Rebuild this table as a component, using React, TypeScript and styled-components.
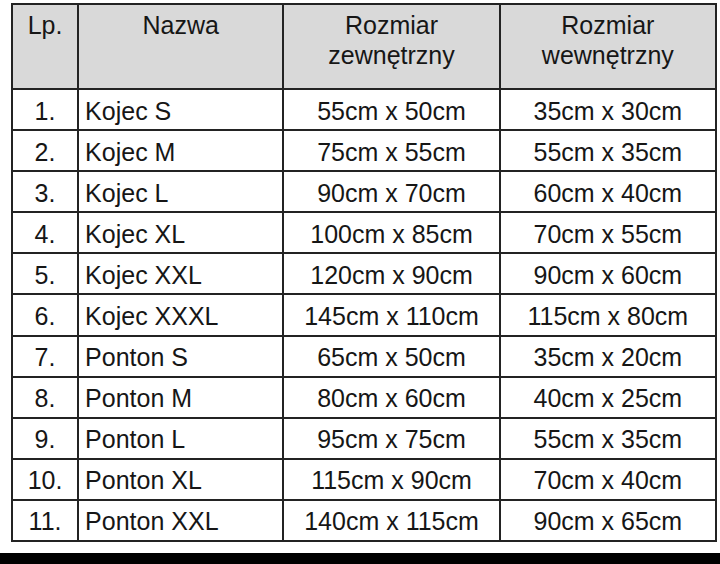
import React from "react";
import styled, { createGlobalStyle } from "styled-components";

const Global = createGlobalStyle`
  html, body { margin: 0; padding: 0; background: #fff; }
  body { font-family: "Liberation Sans", Arial, sans-serif; }
`;

const Page = styled.div`
  height: 564px;
  display: flex;
  flex-direction: column;
  justify-content: space-between;
  background: #fff;
`;

const TableWrap = styled.div`
  padding: 3px 0 0 11px;
`;

const Table = styled.table`
  border-collapse: collapse;
  table-layout: fixed;
  width: 706px;
  color: #161616;
  font-size: 25px;
`;

const HeadRow = styled.tr`
  height: 85px;
  background: #d9d9d9;
`;

const HeadCell = styled.th`
  border: 2px solid #232323;
  font-weight: normal;
  vertical-align: top;
  text-align: center;
  line-height: 30px;
  padding: 5px 4px 0;
`;

const Row = styled.tr`
  height: 41.1px;
`;

const Cell = styled.td<{ $align?: "left" | "center" }>`
  border: 2px solid #232323;
  text-align: ${(p) => p.$align ?? "center"};
  padding: 2px 0 0 ${(p) => (p.$align === "left" ? "6px" : "0")};
  white-space: nowrap;
  line-height: 30px;
  vertical-align: middle;
`;

const BottomBar = styled.div`
  height: 11px;
  background: #000;
`;

const rows: [string, string, string][] = [
  ["Kojec S", "55cm x 50cm", "35cm x 30cm"],
  ["Kojec M", "75cm x 55cm", "55cm x 35cm"],
  ["Kojec L", "90cm x 70cm", "60cm x 40cm"],
  ["Kojec XL", "100cm x 85cm", "70cm x 55cm"],
  ["Kojec XXL", "120cm x 90cm", "90cm x 60cm"],
  ["Kojec XXXL", "145cm x 110cm", "115cm x 80cm"],
  ["Ponton S", "65cm x 50cm", "35cm x 20cm"],
  ["Ponton M", "80cm x 60cm", "40cm x 25cm"],
  ["Ponton L", "95cm x 75cm", "55cm x 35cm"],
  ["Ponton XL", "115cm x 90cm", "70cm x 40cm"],
  ["Ponton XXL", "140cm x 115cm", "90cm x 65cm"],
];

export default function App() {
  return (
    <Page>
      <Global />
      <TableWrap>
        <Table>
          <colgroup>
            <col style={{ width: 66 }} />
            <col style={{ width: 205 }} />
            <col style={{ width: 216 }} />
            <col style={{ width: 216 }} />
          </colgroup>
          <thead>
            <HeadRow>
              <HeadCell>Lp.</HeadCell>
              <HeadCell>Nazwa</HeadCell>
              <HeadCell>
                Rozmiar
                <br />
                zewnętrzny
              </HeadCell>
              <HeadCell>
                Rozmiar
                <br />
                wewnętrzny
              </HeadCell>
            </HeadRow>
          </thead>
          <tbody>
            {rows.map((r, i) => (
              <Row key={i}>
                <Cell>{i + 1}.</Cell>
                <Cell $align="left">{r[0]}</Cell>
                <Cell>{r[1]}</Cell>
                <Cell>{r[2]}</Cell>
              </Row>
            ))}
          </tbody>
        </Table>
      </TableWrap>
      <BottomBar />
    </Page>
  );
}
